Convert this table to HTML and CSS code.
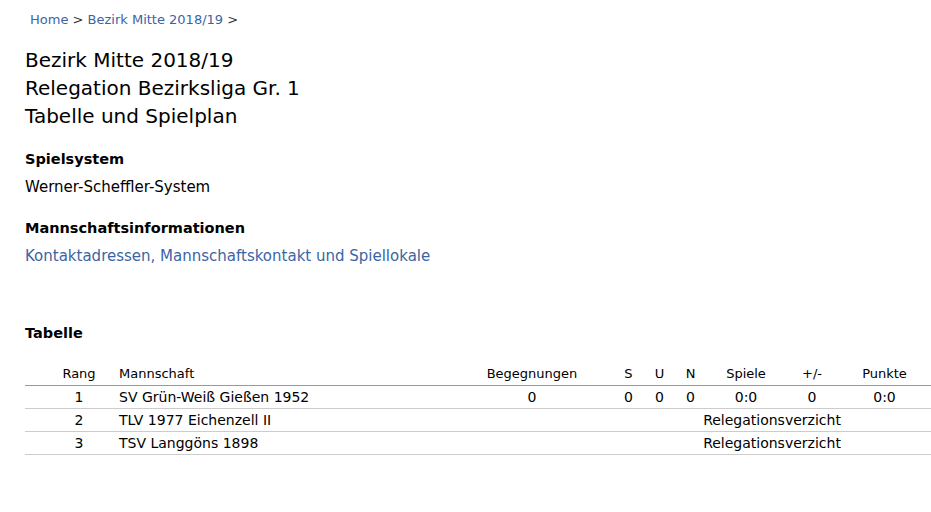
FILE: index.html
```html
<!DOCTYPE html>
<html lang="de">
<head>
    <meta charset="UTF-8">
    <title>Bezirk Mitte 2018/19 - Relegation Bezirksliga Gr. 1</title>
    <link rel="stylesheet" href="styles.css">
</head>
<body>
    <div class="page">
        <div class="breadcrumb">
            <a href="#">Home</a> &gt; <a href="#">Bezirk Mitte 2018/19</a> &gt;
        </div>

        <h1>Bezirk Mitte 2018/19<br>Relegation Bezirksliga Gr. 1<br>Tabelle und Spielplan</h1>

        <h2>Spielsystem</h2>
        <p>Werner-Scheffler-System</p>

        <h2 class="team-info">Mannschaftsinformationen</h2>
        <p><a href="#">Kontaktadressen, Mannschaftskontakt und Spiellokale</a></p>

        <h2 class="table-title">Tabelle</h2>
        <table class="result-set">
            <colgroup>
                <col class="c-rang">
                <col class="c-team">
                <col class="c-matches">
                <col class="c-small">
                <col class="c-small">
                <col class="c-small">
                <col class="c-games">
                <col class="c-diff">
                <col class="c-points">
            </colgroup>
            <thead>
                <tr>
                    <th class="rang">Rang</th>
                    <th class="team">Mannschaft</th>
                    <th>Begegnungen</th>
                    <th>S</th>
                    <th>U</th>
                    <th>N</th>
                    <th>Spiele</th>
                    <th>+/-</th>
                    <th>Punkte</th>
                </tr>
            </thead>
            <tbody>
                <tr>
                    <td class="rang">1</td>
                    <td class="team">SV Grün-Weiß Gießen 1952</td>
                    <td>0</td>
                    <td>0</td>
                    <td>0</td>
                    <td>0</td>
                    <td>0:0</td>
                    <td>0</td>
                    <td>0:0</td>
                </tr>
                <tr>
                    <td class="rang">2</td>
                    <td class="team">TLV 1977 Eichenzell II</td>
                    <td></td>
                    <td colspan="6">Relegationsverzicht</td>
                </tr>
                <tr>
                    <td class="rang">3</td>
                    <td class="team">TSV Langgöns 1898</td>
                    <td></td>
                    <td colspan="6">Relegationsverzicht</td>
                </tr>
            </tbody>
        </table>
    </div>
</body>
</html>
```

FILE: styles.css
```css
body {
    margin: 0;
    font-family: "DejaVu Sans", Verdana, sans-serif;
    font-size: 15px;
    color: #000;
    background: #fff;
}

a {
    color: #3b64a5;
    text-decoration: none;
}

.page {
    padding: 11px 0 0 25px;
}

.breadcrumb {
    padding-left: 5px;
    font-size: 13px;
    line-height: 18px;
    color: #333;
}

h1 {
    margin: 17px 0 0;
    font-size: 20px;
    font-weight: normal;
    line-height: 28px;
}

h2 {
    margin: 20px 0 0;
    font-size: 14.5px;
    font-weight: bold;
    line-height: 18px;
}

p {
    margin: 10px 0 0;
    line-height: 18px;
}

.team-info {
    margin-top: 23px;
}

.table-title {
    margin-top: 59px;
}

.result-set {
    width: 906px;
    margin-top: 21px;
    border-collapse: collapse;
    table-layout: fixed;
    font-size: 14px;
}

.c-rang { width: 88px; }
.c-team { width: 338px; }
.c-matches { width: 162px; }
.c-small { width: 31px; }
.c-games { width: 80px; }
.c-diff { width: 52px; }
.c-points { width: 93px; }

.result-set th,
.result-set td {
    padding: 0 0 1px;
    height: 21px;
    text-align: center;
    font-weight: normal;
    white-space: nowrap;
}

.result-set th {
    font-size: 13px;
    border-bottom: 1px solid #999;
}

.result-set td {
    border-bottom: 1px solid #ccc;
}

.result-set .rang {
    padding-left: 20px;
}

.result-set .team {
    padding-left: 6px;
    text-align: left;
}
```
